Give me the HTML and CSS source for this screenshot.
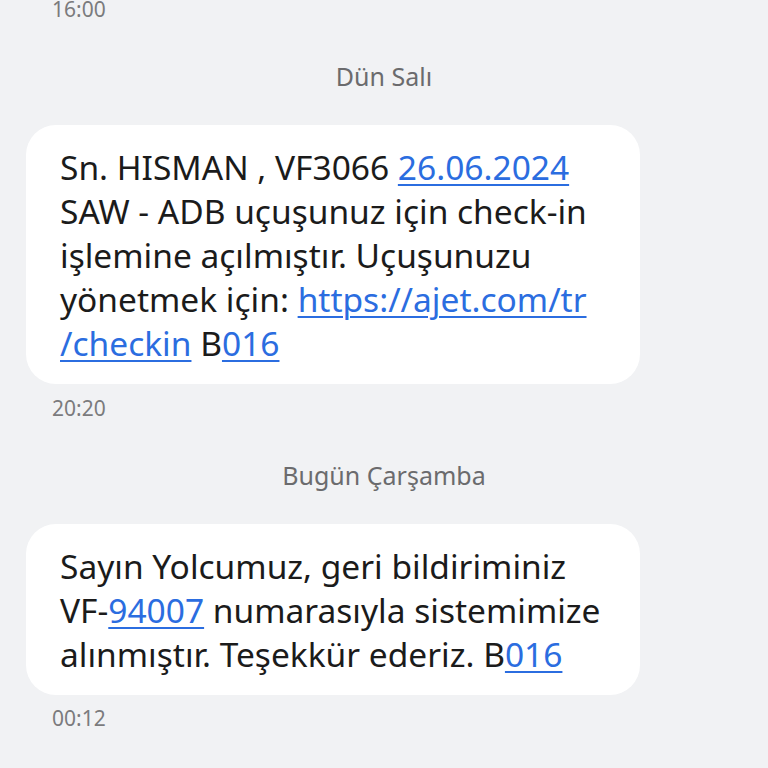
FILE: index.html
```html
<!DOCTYPE html>
<html lang="tr">
<head>
  <meta charset="UTF-8">
  <title>Mesajlar</title>
  <link rel="stylesheet" href="styles.css">
</head>
<body>
  <div class="sohbet">
    <div class="saat ilk">16:00</div>

    <div class="gun">Dün Salı</div>
    <div class="balon">
      <p>Sn. HISMAN , VF3066 <a href="#">26.06.2024</a><br>
      SAW - ADB uçuşunuz için check-in<br>
      işlemine açılmıştır. Uçuşunuzu<br>
      yönetmek için: <a href="#">https://ajet.com/tr<br>/checkin</a> B<a href="#">016</a></p>
    </div>
    <div class="saat">20:20</div>

    <div class="gun">Bugün Çarşamba</div>
    <div class="balon">
      <p>Sayın Yolcumuz, geri bildiriminiz<br>
      VF-<a href="#">94007</a> numarasıyla sistemimize<br>
      alınmıştır. Teşekkür ederiz. B<a href="#">016</a></p>
    </div>
    <div class="saat son">00:12</div>
  </div>
</body>
</html>
```

FILE: styles.css
```css
body {
  margin: 0;
  background-color: #f1f2f4;
  font-family: "Noto Sans", "Open Sans", sans-serif;
}

.sohbet {
  padding: 0 26px;
  display: flex;
  flex-direction: column;
}

.saat {
  font-size: 21px;
  line-height: 26px;
  color: #7b7b7d;
  padding-left: 26px;
  margin-top: 11px;
}

.saat.ilk {
  margin-top: -4px;
}

.saat.son {
  margin-top: 10px;
}

.gun {
  font-size: 25px;
  line-height: 30px;
  color: #6b6b6d;
  text-align: center;
  margin: 39px 0 34px;
}

.balon {
  box-sizing: border-box;
  width: 614px;
  background-color: white;
  border-radius: 30px;
  padding: 20px 34px 19px;
}

.balon p {
  margin: 0;
  font-size: 33.5px;
  line-height: 44px;
  color: #1b1b1b;
  white-space: nowrap;
}

.balon a {
  color: #2b6de0;
  text-decoration: underline;
  text-underline-offset: 4px;
  text-decoration-thickness: 2px;
}
```
